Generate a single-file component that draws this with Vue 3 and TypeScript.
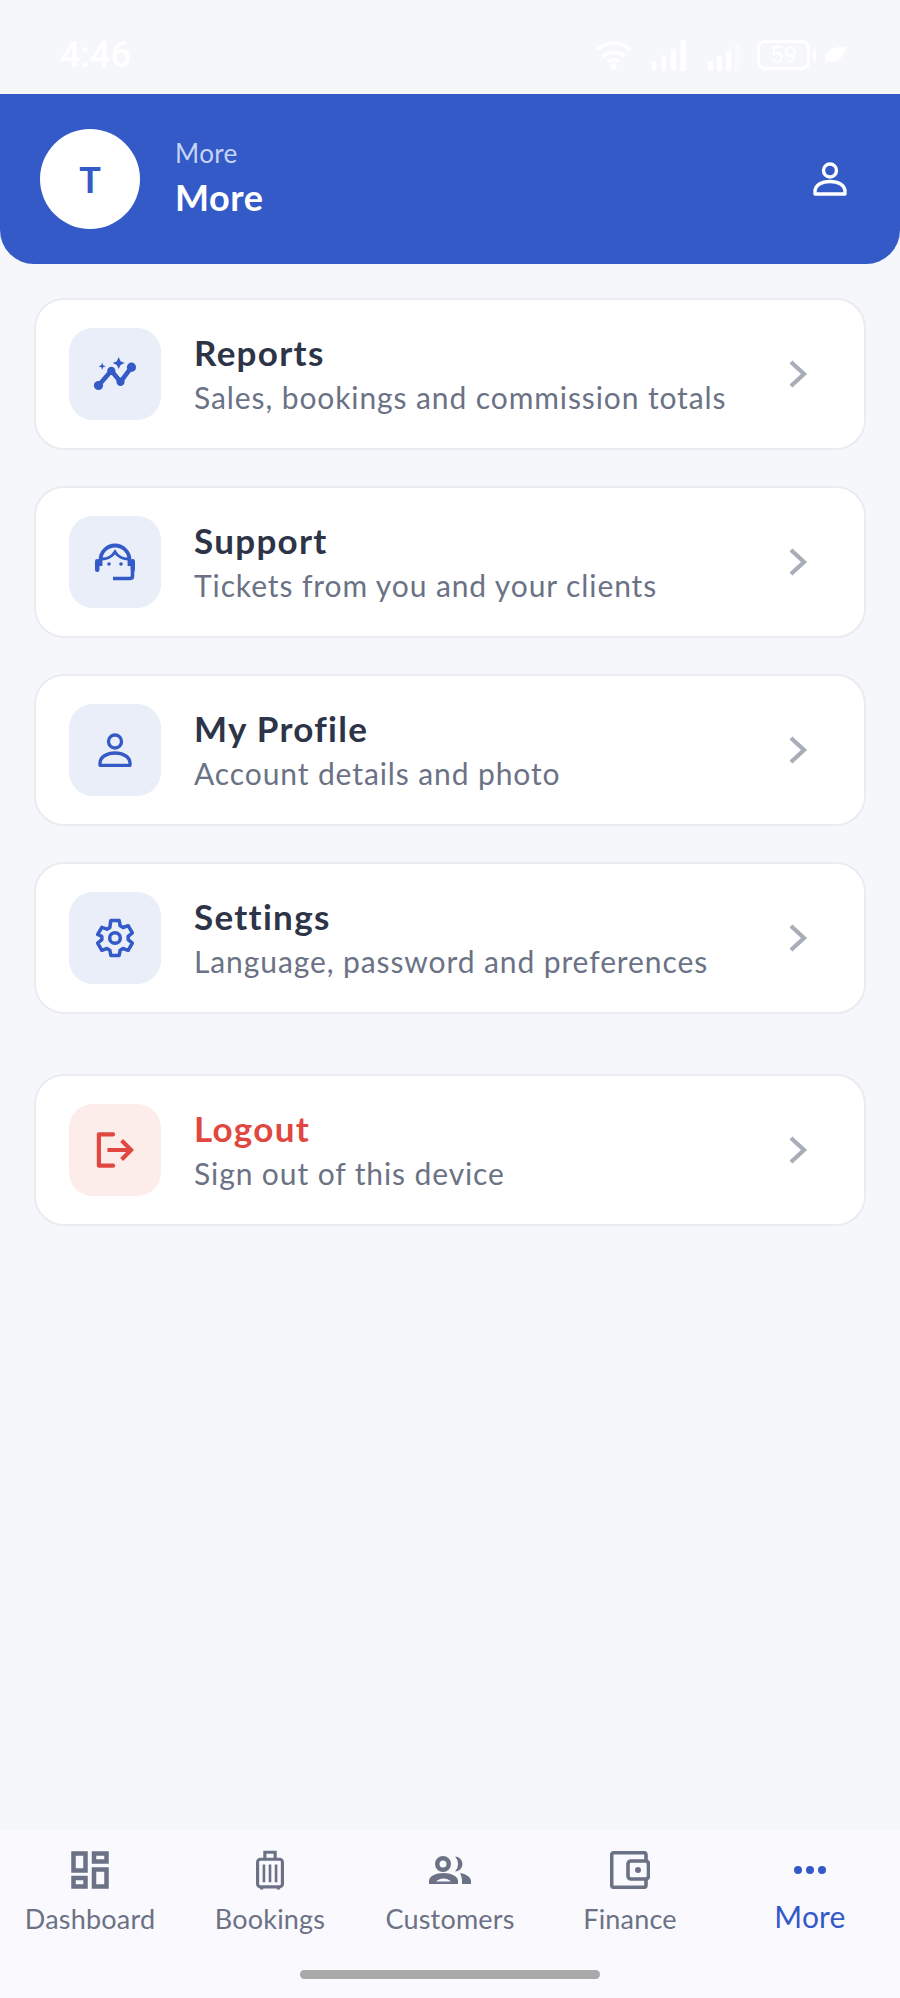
<template>
  <div class="page">
    <div class="status">
      <span class="status__time">4:46</span>
      <div class="status__icons">
        <svg class="wifi" width="37" height="31" viewBox="0 0 40 34" fill="none" stroke="#fff" stroke-width="4">
          <path d="M2 11C12 1 28 1 38 11" />
          <path d="M8 18c7-6 17-6 24 0" />
          <path d="M14 24c4-3 8-3 12 0" />
          <circle cx="20" cy="29" r="3.500" fill="#fff" stroke="none" />
        </svg>
        <svg class="bars" width="36" height="31" viewBox="0 0 38 32" fill="#fff">
          <rect x="0" y="22" width="5" height="10" />
          <rect x="10" y="16" width="5" height="16" />
          <rect x="20" y="9" width="5" height="23" />
          <rect x="30" y="0" width="6" height="32" />
        </svg>
        <svg class="bars bars--low" width="32" height="26" viewBox="0 0 32 26" fill="#fff">
          <rect x="0" y="16" width="5" height="10" />
          <rect x="9" y="11" width="5" height="15" />
          <rect x="18" y="6" width="5" height="20" />
          <rect x="27" y="0" width="5" height="26" opacity="0.4" />
        </svg>
        <div class="battery">
          <span class="battery__level">59</span>
          <i class="battery__cap"></i>
        </div>
        <svg width="24" height="20" viewBox="0 0 24 24" fill="#fff" preserveAspectRatio="none">
          <path d="M23 2C12 2 3 5 2 15c0 2 .5 3 1 4l-2 3 1.500 1 2-3c10 2 17-6 18.500-18z" />
        </svg>
      </div>
    </div>

    <header class="top">
      <div class="top__avatar">T</div>
      <div class="top__text">
        <span class="top__sub">More</span>
        <span class="top__title">More</span>
      </div>
      <svg class="top__user" width="36" height="36" viewBox="0 0 36 36" fill="none" stroke="#fff" stroke-width="3.400">
        <circle cx="18" cy="9.500" r="6.500" />
        <path d="M3 33v-2.500C3 24 10 20.500 18 20.500S33 24 33 30.500V33z" stroke-linejoin="round" />
      </svg>
    </header>

    <main class="list">
      <a v-for="item in items" :key="item.title" class="card" :class="{ 'card--danger': item.danger }">
        <span class="card__icon">
          <svg v-if="item.icon === 'reports'" width="44" height="35" viewBox="0 0 48 38">
            <path d="M6 31 20 15l10 12L42 11" fill="none" stroke="currentColor" stroke-width="5" stroke-linejoin="round" />
            <circle cx="6" cy="31" r="5" fill="currentColor" />
            <circle cx="20" cy="15" r="4.500" fill="currentColor" />
            <circle cx="30" cy="27" r="4.500" fill="currentColor" />
            <circle cx="42" cy="11" r="5" fill="currentColor" />
            <path d="M28 0l2 4.500 4.500 2-4.500 2-2 4.500-2-4.500-4.500-2 4.500-2z" fill="currentColor" />
            <path d="M10 6l1 3 3 1-3 1-1 3-1-3-3-1 3-1z" fill="currentColor" />
          </svg>
          <svg v-else-if="item.icon === 'support'" width="42" height="38" viewBox="0 0 42 38" fill="none" stroke="currentColor">
            <path d="M6.500 23v-6a14.500 14.500 0 0 1 29 0v6" stroke-width="3.800" />
            <path d="M8 16c4 0 10-2 13-7 3 5 9 7 13 7" stroke-width="3" />
            <rect x="1" y="16" width="4.500" height="13" rx="2.200" fill="currentColor" stroke="none" />
            <rect x="36.500" y="16" width="4.500" height="13" rx="2.200" fill="currentColor" stroke="none" />
            <circle cx="15" cy="21" r="1.800" fill="currentColor" stroke="none" />
            <circle cx="27" cy="21" r="1.800" fill="currentColor" stroke="none" />
            <path d="M38.500 28v5c0 1.500-1 2.500-2.500 2.500H19" stroke-width="3.600" />
          </svg>
          <svg v-else-if="item.icon === 'profile'" width="34" height="34" viewBox="0 0 34 34" fill="none" stroke="currentColor" stroke-width="3.300">
            <circle cx="17" cy="8.500" r="6.500" />
            <path d="M2 32.300V30c0-6 7-10 15-10s15 4 15 10v2.300z" stroke-linejoin="round" />
          </svg>
          <svg v-else-if="item.icon === 'settings'" width="40" height="40" viewBox="0 0 24 24" fill="none" stroke="currentColor" stroke-width="2.100" stroke-linejoin="round">
            <circle cx="12" cy="12" r="3.200" />
            <path d="M9.500 1.500h5l.6 3.200 1.700 1 3.100-1.100 2.500 4.300-2.500 2.100v2l2.500 2.100-2.500 4.300-3.100-1.100-1.700 1-.6 3.200h-5l-.6-3.200-1.700-1-3.100 1.100-2.500-4.300 2.500-2.100v-2L1.600 9.900l2.500-4.300 3.100 1.100 1.700-1z" />
          </svg>
          <svg v-else width="38" height="36" viewBox="0 0 40 38" fill="none" stroke="currentColor" stroke-width="4.400">
            <path d="M18 2.500H3v33h15" stroke-linejoin="round" stroke-linecap="round" />
            <path d="M12 19h25M27 9l10 10-10 10" />
          </svg>
        </span>
        <span class="card__body">
          <span class="card__title">{{ item.title }}</span>
          <span class="card__desc">{{ item.desc }}</span>
        </span>
        <svg class="card__chevron" width="20" height="30" viewBox="0 0 20 30" fill="none" stroke="#a9acb9" stroke-width="4.200">
          <path d="M3 3l13 12L3 27" />
        </svg>
      </a>
    </main>

    <nav class="tabs">
      <div v-for="tab in tabs" :key="tab.label" class="tab" :class="{ 'tab--active': tab.active }">
        <span class="tab__icon">
          <svg v-if="tab.icon === 'dashboard'" width="38" height="38" viewBox="0 0 38 38" fill="none" stroke="currentColor" stroke-width="4.500">
            <rect x="2.500" y="2.500" width="12" height="17" />
            <rect x="23" y="2.500" width="12.500" height="8" />
            <rect x="2.500" y="27" width="12" height="8.500" />
            <rect x="23" y="18.500" width="12.500" height="17" />
          </svg>
          <svg v-else-if="tab.icon === 'bookings'" width="28" height="42" viewBox="0 0 30 42" fill="none" stroke="currentColor" stroke-width="3.400">
            <rect x="1.700" y="9.500" width="26.600" height="29.500" rx="3" />
            <path d="M9.500 9V2h11v7" />
            <path d="M8.500 15v19M15 15v19M21.500 15v19" stroke-width="2.800" />
            <path d="M6 39v3M24 39v3" />
          </svg>
          <svg v-else-if="tab.icon === 'customers'" width="42" height="28" viewBox="0 0 42 28" fill="currentColor" fill-rule="evenodd">
            <path d="M14 0a8 8 0 1 1 0 16 8 8 0 0 1 0-16zm0 4.500a3.500 3.500 0 1 0 0 7 3.500 3.500 0 0 0 0-7z" />
            <path d="M26 .5a7.500 7.500 0 0 1 0 15c2-2 3-5 3-7.500s-1-5.500-3-7.500z" />
            <path d="M0 28v-3c0-5 7-8 14.500-8S29 20 29 25v3zM7 25.500h15c-2-2-5-3-7.500-3s-5.500 1-7.500 3z" />
            <path d="M31 17c6 1 11 4 11 8v3h-9v-3c0-3-1-6-2-8z" />
          </svg>
          <svg v-else-if="tab.icon === 'finance'" width="40" height="38" viewBox="0 0 40 38" fill="none" stroke="currentColor" stroke-width="3.600">
            <path d="M36 10V4c0-1.500-1-2.300-2.300-2.300H4C2.700 1.700 1.700 2.700 1.700 4v30c0 1.300 1 2.300 2.300 2.300h30c1.300 0 2-1 2-2.300v-6" />
            <rect x="18" y="10" width="20.500" height="18" rx="3" />
            <circle cx="28" cy="19" r="3" fill="currentColor" stroke="none" />
          </svg>
          <svg v-else width="34" height="10" viewBox="0 0 34 10" fill="currentColor">
            <circle cx="5" cy="5" r="4" />
            <circle cx="17" cy="5" r="4" />
            <circle cx="29" cy="5" r="4" />
          </svg>
        </span>
        <span class="tab__label">{{ tab.label }}</span>
      </div>
      <i class="home-bar"></i>
    </nav>
  </div>
</template>

<script setup lang="ts">
interface MenuItem {
  icon: string
  title: string
  desc: string
  danger?: boolean
}

interface Tab {
  icon: string
  label: string
  active?: boolean
}

const items: MenuItem[] = [
  { icon: 'reports', title: 'Reports', desc: 'Sales, bookings and commission totals' },
  { icon: 'support', title: 'Support', desc: 'Tickets from you and your clients' },
  { icon: 'profile', title: 'My Profile', desc: 'Account details and photo' },
  { icon: 'settings', title: 'Settings', desc: 'Language, password and preferences' },
  { icon: 'logout', title: 'Logout', desc: 'Sign out of this device', danger: true },
]

const tabs: Tab[] = [
  { icon: 'dashboard', label: 'Dashboard' },
  { icon: 'bookings', label: 'Bookings' },
  { icon: 'customers', label: 'Customers' },
  { icon: 'finance', label: 'Finance' },
  { icon: 'more', label: 'More', active: true },
]
</script>

<style scoped>
.page {
  display: flex;
  flex-direction: column;
  width: 900px;
  height: 1998px;
  background: #f5f7fb;
  font-family: Lato, "Noto Sans", sans-serif;
  overflow: hidden;
}

.status {
  display: flex;
  align-items: center;
  justify-content: space-between;
  height: 94px;
  padding: 16px 53px 0 60px;
  box-sizing: border-box;
  color: #fff;
}

.status__time {
  font-family: Roboto, sans-serif;
  font-size: 36px;
  font-weight: 500;
}

.status__icons {
  display: flex;
  align-items: center;
}

.wifi {
  margin-right: 20px;
}

.bars {
  align-self: flex-end;
  margin-right: 20px;
}

.bars--low {
  margin-right: 17px;
}

.battery {
  display: flex;
  align-items: center;
  justify-content: center;
  position: relative;
  width: 53px;
  height: 30px;
  margin-right: 13px;
  box-sizing: border-box;
  border: 3px solid #fff;
  border-radius: 8px;
  font-family: Roboto, sans-serif;
  font-size: 24px;
}

.battery__cap {
  position: absolute;
  right: -9px;
  width: 3px;
  height: 12px;
  background: #fff;
}

.top {
  display: flex;
  align-items: center;
  height: 170px;
  padding: 0 52px 0 40px;
  box-sizing: border-box;
  background: #335ac6;
  border-radius: 0 0 34px 34px;
  color: #fff;
}

.top__avatar {
  display: flex;
  align-items: center;
  justify-content: center;
  width: 100px;
  height: 100px;
  border-radius: 50%;
  background: #fff;
  color: #335ac6;
  font-size: 36px;
  font-weight: 700;
}

.top__text {
  display: flex;
  flex-direction: column;
  gap: 8px;
  flex: 1;
  margin-left: 35px;
  padding-bottom: 3px;
}

.top__sub {
  font-size: 26px;
  line-height: 30px;
  letter-spacing: 0.4px;
  color: #c6d4f5;
}

.top__title {
  font-size: 36px;
  line-height: 42px;
  font-weight: 700;
  letter-spacing: 0.6px;
}

.list {
  display: flex;
  flex-direction: column;
  gap: 36px;
  padding: 34px 34px 0;
}

.card {
  display: flex;
  align-items: center;
  height: 152px;
  padding: 0 56px 0 33px;
  box-sizing: border-box;
  background: #fff;
  border: 2px solid #eaecf1;
  border-radius: 30px;
}

.card--danger {
  margin-top: 24px;
}

.card__icon {
  display: flex;
  align-items: center;
  justify-content: center;
  flex: none;
  width: 92px;
  height: 92px;
  border-radius: 24px;
  background: #e9eef9;
  color: #335ac6;
}

.card--danger .card__icon {
  background: #fcecea;
  color: #e0483f;
}

.card__body {
  display: flex;
  flex-direction: column;
  gap: 7px;
  flex: 1;
  margin-left: 33px;
  padding-bottom: 2px;
}

.card__title {
  font-size: 35px;
  line-height: 40px;
  font-weight: 700;
  letter-spacing: 1.3px;
  color: #2e3448;
}

.card--danger .card__title {
  color: #e0483f;
}

.card__desc {
  font-size: 30px;
  line-height: 36px;
  letter-spacing: 0.9px;
  color: #6b7285;
}

.tabs {
  display: flex;
  position: relative;
  margin-top: auto;
  height: 168px;
  background: #faf9fe;
}

.tab {
  display: flex;
  flex-direction: column;
  align-items: center;
  flex: 1;
  color: #6b7285;
}

.tab__icon {
  display: flex;
  align-items: center;
  justify-content: center;
  height: 50px;
  margin-top: 15px;
}

.tab__label {
  margin-top: 7px;
  font-size: 27px;
  line-height: 34px;
  letter-spacing: 0.2px;
}

.tab--active {
  color: #335ac6;
}

.tab--active .tab__label {
  margin-top: 4px;
  font-size: 30px;
}

.home-bar {
  position: absolute;
  left: 300px;
  bottom: 19px;
  width: 300px;
  height: 9px;
  border-radius: 5px;
  background: #a9a9a9;
}
</style>
